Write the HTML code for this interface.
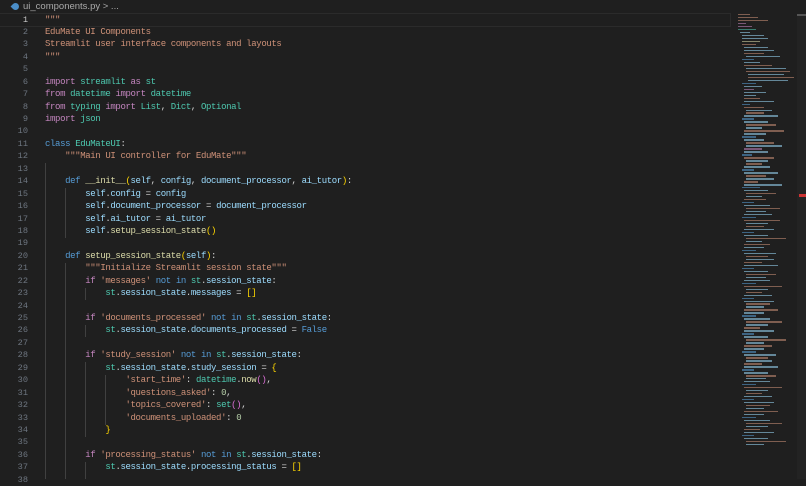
<!DOCTYPE html>
<html><head><meta charset="utf-8"><style>
html,body{margin:0;padding:0;background:#1f1f1f;width:806px;height:479px;overflow:hidden}
.bc{position:absolute;left:12px;top:1px;font:9.5px "Liberation Sans",sans-serif;color:#a9a9a9;height:12px;line-height:12px}
.bc i{display:inline-block;width:7px;height:7px;background:#4b8ec8;border-radius:50% 50% 50% 0;margin-right:4px;vertical-align:-0.5px;transform:rotate(45deg)}
.code{position:absolute;left:0;top:13.5px;font:9px/12.44px "Liberation Mono",monospace;color:#d4d4d4}
.l{height:12.44px;position:relative}
.n{position:absolute;left:0;width:28px;text-align:right;color:#6e7681;font-size:8.6px}
.t{position:absolute;left:45px;white-space:pre;letter-spacing:-0.37px}
.cur{outline:1px solid #2b2b2b;width:730px}
.k{color:#c586c0}.d{color:#569cd6}.f{color:#dcdcaa}.v{color:#9cdcfe}.s{color:#ce9178}.c{color:#4ec9b0}.m{color:#b5cea8}.y{color:#ffd700}.p{color:#da70d6}
.g{position:absolute;width:1px;background:#404040}
.mm{position:absolute;left:738px;top:14px;width:58px}
.mm div{height:1.4px;margin-bottom:1.6px;opacity:.55}
.sb{position:absolute;left:797px;top:14px;width:9px;height:465px;background:#232323}
</style></head><body>
<div class="bc"><i></i>ui_components.py &gt; ...</div>
<div class="g" style="left:45px;top:163px;height:316px"></div>
<div class="g" style="left:65px;top:188px;height:50px"></div>
<div class="g" style="left:65px;top:263px;height:216px"></div>
<div class="g" style="left:85px;top:288px;height:12px"></div>
<div class="g" style="left:85px;top:325px;height:12px"></div>
<div class="g" style="left:85px;top:362px;height:75px"></div>
<div class="g" style="left:105px;top:375px;height:50px"></div>
<div class="g" style="left:85px;top:462px;height:17px"></div>
<div class="code">
<div class="l cur"><span class="n" style="color:#ccc">1</span><span class="t s">"""</span></div>
<div class="l"><span class="n">2</span><span class="t s">EduMate UI Components</span></div>
<div class="l"><span class="n">3</span><span class="t s">Streamlit user interface components and layouts</span></div>
<div class="l"><span class="n">4</span><span class="t s">"""</span></div>
<div class="l"><span class="n">5</span><span class="t"></span></div>
<div class="l"><span class="n">6</span><span class="t"><span class="k">import</span> <span class="c">streamlit</span> <span class="k">as</span> <span class="c">st</span></span></div>
<div class="l"><span class="n">7</span><span class="t"><span class="k">from</span> <span class="c">datetime</span> <span class="k">import</span> <span class="c">datetime</span></span></div>
<div class="l"><span class="n">8</span><span class="t"><span class="k">from</span> <span class="c">typing</span> <span class="k">import</span> <span class="c">List</span>, <span class="c">Dict</span>, <span class="c">Optional</span></span></div>
<div class="l"><span class="n">9</span><span class="t"><span class="k">import</span> <span class="c">json</span></span></div>
<div class="l"><span class="n">10</span><span class="t"></span></div>
<div class="l"><span class="n">11</span><span class="t"><span class="d">class</span> <span class="c">EduMateUI</span>:</span></div>
<div class="l"><span class="n">12</span><span class="t s">    """Main UI controller for EduMate"""</span></div>
<div class="l"><span class="n">13</span><span class="t"></span></div>
<div class="l"><span class="n">14</span><span class="t">    <span class="d">def</span> <span class="f">__init__</span><span class="y">(</span><span class="v">self</span>, <span class="v">config</span>, <span class="v">document_processor</span>, <span class="v">ai_tutor</span><span class="y">)</span>:</span></div>
<div class="l"><span class="n">15</span><span class="t">        <span class="v">self</span>.<span class="v">config</span> = <span class="v">config</span></span></div>
<div class="l"><span class="n">16</span><span class="t">        <span class="v">self</span>.<span class="v">document_processor</span> = <span class="v">document_processor</span></span></div>
<div class="l"><span class="n">17</span><span class="t">        <span class="v">self</span>.<span class="v">ai_tutor</span> = <span class="v">ai_tutor</span></span></div>
<div class="l"><span class="n">18</span><span class="t">        <span class="v">self</span>.<span class="f">setup_session_state</span><span class="y">()</span></span></div>
<div class="l"><span class="n">19</span><span class="t"></span></div>
<div class="l"><span class="n">20</span><span class="t">    <span class="d">def</span> <span class="f">setup_session_state</span><span class="y">(</span><span class="v">self</span><span class="y">)</span>:</span></div>
<div class="l"><span class="n">21</span><span class="t s">        """Initialize Streamlit session state"""</span></div>
<div class="l"><span class="n">22</span><span class="t">        <span class="k">if</span> <span class="s">'messages'</span> <span class="d">not</span> <span class="d">in</span> <span class="c">st</span>.<span class="v">session_state</span>:</span></div>
<div class="l"><span class="n">23</span><span class="t">            <span class="c">st</span>.<span class="v">session_state</span>.<span class="v">messages</span> = <span class="y">[]</span></span></div>
<div class="l"><span class="n">24</span><span class="t"></span></div>
<div class="l"><span class="n">25</span><span class="t">        <span class="k">if</span> <span class="s">'documents_processed'</span> <span class="d">not</span> <span class="d">in</span> <span class="c">st</span>.<span class="v">session_state</span>:</span></div>
<div class="l"><span class="n">26</span><span class="t">            <span class="c">st</span>.<span class="v">session_state</span>.<span class="v">documents_processed</span> = <span class="d">False</span></span></div>
<div class="l"><span class="n">27</span><span class="t"></span></div>
<div class="l"><span class="n">28</span><span class="t">        <span class="k">if</span> <span class="s">'study_session'</span> <span class="d">not</span> <span class="d">in</span> <span class="c">st</span>.<span class="v">session_state</span>:</span></div>
<div class="l"><span class="n">29</span><span class="t">            <span class="c">st</span>.<span class="v">session_state</span>.<span class="v">study_session</span> = <span class="y">{</span></span></div>
<div class="l"><span class="n">30</span><span class="t">                <span class="s">'start_time'</span>: <span class="c">datetime</span>.<span class="f">now</span><span class="p">()</span>,</span></div>
<div class="l"><span class="n">31</span><span class="t">                <span class="s">'questions_asked'</span>: <span class="m">0</span>,</span></div>
<div class="l"><span class="n">32</span><span class="t">                <span class="s">'topics_covered'</span>: <span class="c">set</span><span class="p">()</span>,</span></div>
<div class="l"><span class="n">33</span><span class="t">                <span class="s">'documents_uploaded'</span>: <span class="m">0</span></span></div>
<div class="l"><span class="n">34</span><span class="t">            <span class="y">}</span></span></div>
<div class="l"><span class="n">35</span><span class="t"></span></div>
<div class="l"><span class="n">36</span><span class="t">        <span class="k">if</span> <span class="s">'processing_status'</span> <span class="d">not</span> <span class="d">in</span> <span class="c">st</span>.<span class="v">session_state</span>:</span></div>
<div class="l"><span class="n">37</span><span class="t">            <span class="c">st</span>.<span class="v">session_state</span>.<span class="v">processing_status</span> = <span class="y">[]</span></span></div>
<div class="l"><span class="n">38</span><span class="t"></span></div>
</div>
<div class="mm">
<div style="width:12px;background:#ce9178"></div><div style="width:20px;background:#ce9178"></div><div style="width:30px;background:#ce9178"></div><div style="width:8px;background:#c586c0"></div><div style="width:14px;background:#c586c0"></div><div style="width:18px;background:#4ec9b0"></div><div style="width:10px;margin-left:2px;background:#9cdcfe"></div><div style="width:22px;margin-left:4px;background:#9cdcfe"></div><div style="width:26px;margin-left:4px;background:#9cdcfe"></div><div style="width:18px;margin-left:4px;background:#dcdcaa"></div><div style="width:14px;margin-left:4px;background:#ce9178"></div><div style="width:24px;margin-left:6px;background:#9cdcfe"></div><div style="width:30px;margin-left:6px;background:#9cdcfe"></div><div style="width:20px;margin-left:6px;background:#ce9178"></div><div style="width:34px;margin-left:8px;background:#9cdcfe"></div><div style="width:12px;margin-left:4px;background:#569cd6"></div><div style="width:16px;margin-left:6px;background:#9cdcfe"></div><div style="width:28px;margin-left:6px;background:#ce9178"></div><div style="width:40px;margin-left:8px;background:#9cdcfe"></div><div style="width:44px;margin-left:8px;background:#ce9178"></div><div style="width:36px;margin-left:10px;background:#9cdcfe"></div><div style="width:46px;margin-left:10px;background:#ce9178"></div><div style="width:40px;margin-left:10px;background:#9cdcfe"></div><div style="width:14px;margin-left:4px;background:#569cd6"></div><div style="width:18px;margin-left:6px;background:#9cdcfe"></div><div style="width:10px;margin-left:6px;background:#c586c0"></div><div style="width:22px;margin-left:6px;background:#9cdcfe"></div><div style="width:12px;margin-left:6px;background:#9cdcfe"></div><div style="width:16px;margin-left:6px;background:#ce9178"></div><div style="width:30px;margin-left:6px;background:#9cdcfe"></div><div style="width:8px;margin-left:4px;background:#569cd6"></div><div style="width:20px;margin-left:6px;background:#ce9178"></div><div style="width:26px;margin-left:8px;background:#9cdcfe"></div><div style="width:18px;margin-left:8px;background:#ce9178"></div><div style="width:34px;margin-left:6px;background:#9cdcfe"></div><div style="width:12px;margin-left:4px;background:#569cd6"></div><div style="width:24px;margin-left:6px;background:#9cdcfe"></div><div style="width:30px;margin-left:8px;background:#ce9178"></div><div style="width:16px;margin-left:8px;background:#9cdcfe"></div><div style="width:40px;margin-left:6px;background:#ce9178"></div><div style="width:22px;margin-left:6px;background:#9cdcfe"></div><div style="width:14px;margin-left:4px;background:#569cd6"></div><div style="width:20px;margin-left:6px;background:#9cdcfe"></div><div style="width:28px;margin-left:8px;background:#ce9178"></div><div style="width:36px;margin-left:8px;background:#9cdcfe"></div><div style="width:18px;margin-left:6px;background:#c586c0"></div><div style="width:24px;margin-left:6px;background:#9cdcfe"></div><div style="width:10px;margin-left:4px;background:#569cd6"></div><div style="width:30px;margin-left:6px;background:#ce9178"></div><div style="width:22px;margin-left:8px;background:#9cdcfe"></div><div style="width:16px;margin-left:8px;background:#ce9178"></div><div style="width:26px;margin-left:6px;background:#9cdcfe"></div><div style="width:12px;margin-left:4px;background:#569cd6"></div><div style="width:34px;margin-left:6px;background:#9cdcfe"></div><div style="width:20px;margin-left:8px;background:#ce9178"></div><div style="width:28px;margin-left:8px;background:#9cdcfe"></div><div style="width:14px;margin-left:6px;background:#ce9178"></div><div style="width:38px;margin-left:6px;background:#9cdcfe"></div><div style="width:18px;margin-left:4px;background:#569cd6"></div><div style="width:24px;margin-left:6px;background:#9cdcfe"></div><div style="width:30px;margin-left:8px;background:#ce9178"></div><div style="width:16px;margin-left:8px;background:#9cdcfe"></div><div style="width:22px;margin-left:6px;background:#ce9178"></div><div style="width:12px;margin-left:4px;background:#569cd6"></div><div style="width:26px;margin-left:6px;background:#9cdcfe"></div><div style="width:34px;margin-left:8px;background:#ce9178"></div><div style="width:20px;margin-left:8px;background:#9cdcfe"></div><div style="width:28px;margin-left:6px;background:#9cdcfe"></div><div style="width:14px;margin-left:4px;background:#569cd6"></div><div style="width:36px;margin-left:6px;background:#ce9178"></div><div style="width:22px;margin-left:8px;background:#9cdcfe"></div><div style="width:18px;margin-left:8px;background:#ce9178"></div><div style="width:30px;margin-left:6px;background:#9cdcfe"></div><div style="width:12px;margin-left:4px;background:#569cd6"></div><div style="width:24px;margin-left:6px;background:#9cdcfe"></div><div style="width:40px;margin-left:8px;background:#ce9178"></div><div style="width:16px;margin-left:8px;background:#9cdcfe"></div><div style="width:26px;margin-left:6px;background:#ce9178"></div><div style="width:20px;margin-left:6px;background:#9cdcfe"></div><div style="width:14px;margin-left:4px;background:#569cd6"></div><div style="width:32px;margin-left:6px;background:#9cdcfe"></div><div style="width:22px;margin-left:8px;background:#ce9178"></div><div style="width:28px;margin-left:8px;background:#9cdcfe"></div><div style="width:18px;margin-left:6px;background:#ce9178"></div><div style="width:34px;margin-left:6px;background:#9cdcfe"></div><div style="width:12px;margin-left:4px;background:#569cd6"></div><div style="width:24px;margin-left:6px;background:#9cdcfe"></div><div style="width:30px;margin-left:8px;background:#ce9178"></div><div style="width:20px;margin-left:8px;background:#9cdcfe"></div><div style="width:26px;margin-left:6px;background:#9cdcfe"></div><div style="width:14px;margin-left:4px;background:#569cd6"></div><div style="width:38px;margin-left:6px;background:#ce9178"></div><div style="width:22px;margin-left:8px;background:#9cdcfe"></div><div style="width:16px;margin-left:8px;background:#ce9178"></div><div style="width:28px;margin-left:6px;background:#9cdcfe"></div><div style="width:12px;margin-left:4px;background:#569cd6"></div><div style="width:30px;margin-left:6px;background:#9cdcfe"></div><div style="width:24px;margin-left:8px;background:#ce9178"></div><div style="width:18px;margin-left:8px;background:#9cdcfe"></div><div style="width:34px;margin-left:6px;background:#ce9178"></div><div style="width:20px;margin-left:6px;background:#9cdcfe"></div><div style="width:14px;margin-left:4px;background:#569cd6"></div><div style="width:26px;margin-left:6px;background:#9cdcfe"></div><div style="width:36px;margin-left:8px;background:#ce9178"></div><div style="width:22px;margin-left:8px;background:#9cdcfe"></div><div style="width:16px;margin-left:6px;background:#ce9178"></div><div style="width:30px;margin-left:6px;background:#9cdcfe"></div><div style="width:12px;margin-left:4px;background:#569cd6"></div><div style="width:24px;margin-left:6px;background:#9cdcfe"></div><div style="width:40px;margin-left:8px;background:#ce9178"></div><div style="width:18px;margin-left:8px;background:#9cdcfe"></div><div style="width:28px;margin-left:6px;background:#ce9178"></div><div style="width:20px;margin-left:6px;background:#9cdcfe"></div><div style="width:14px;margin-left:4px;background:#569cd6"></div><div style="width:32px;margin-left:6px;background:#9cdcfe"></div><div style="width:22px;margin-left:8px;background:#ce9178"></div><div style="width:26px;margin-left:8px;background:#9cdcfe"></div><div style="width:18px;margin-left:6px;background:#ce9178"></div><div style="width:34px;margin-left:6px;background:#9cdcfe"></div><div style="width:12px;margin-left:4px;background:#569cd6"></div><div style="width:24px;margin-left:6px;background:#9cdcfe"></div><div style="width:30px;margin-left:8px;background:#ce9178"></div><div style="width:20px;margin-left:8px;background:#9cdcfe"></div><div style="width:26px;margin-left:6px;background:#9cdcfe"></div><div style="width:14px;margin-left:4px;background:#569cd6"></div><div style="width:38px;margin-left:6px;background:#ce9178"></div><div style="width:22px;margin-left:8px;background:#9cdcfe"></div><div style="width:16px;margin-left:8px;background:#ce9178"></div><div style="width:28px;margin-left:6px;background:#9cdcfe"></div><div style="width:12px;margin-left:4px;background:#569cd6"></div><div style="width:30px;margin-left:6px;background:#9cdcfe"></div><div style="width:24px;margin-left:8px;background:#ce9178"></div><div style="width:18px;margin-left:8px;background:#9cdcfe"></div><div style="width:34px;margin-left:6px;background:#ce9178"></div><div style="width:20px;margin-left:6px;background:#9cdcfe"></div><div style="width:14px;margin-left:4px;background:#569cd6"></div><div style="width:26px;margin-left:6px;background:#9cdcfe"></div><div style="width:36px;margin-left:8px;background:#ce9178"></div><div style="width:22px;margin-left:8px;background:#9cdcfe"></div><div style="width:16px;margin-left:6px;background:#ce9178"></div><div style="width:30px;margin-left:6px;background:#9cdcfe"></div><div style="width:12px;margin-left:4px;background:#569cd6"></div><div style="width:24px;margin-left:6px;background:#9cdcfe"></div><div style="width:40px;margin-left:8px;background:#ce9178"></div><div style="width:18px;margin-left:8px;background:#9cdcfe"></div>
</div>
<div class="sb"><div style="position:absolute;left:0;top:0;width:9px;height:2px;background:#555"></div><div style="position:absolute;left:2px;top:180px;width:7px;height:3px;background:#c33"></div></div>
</body></html>
